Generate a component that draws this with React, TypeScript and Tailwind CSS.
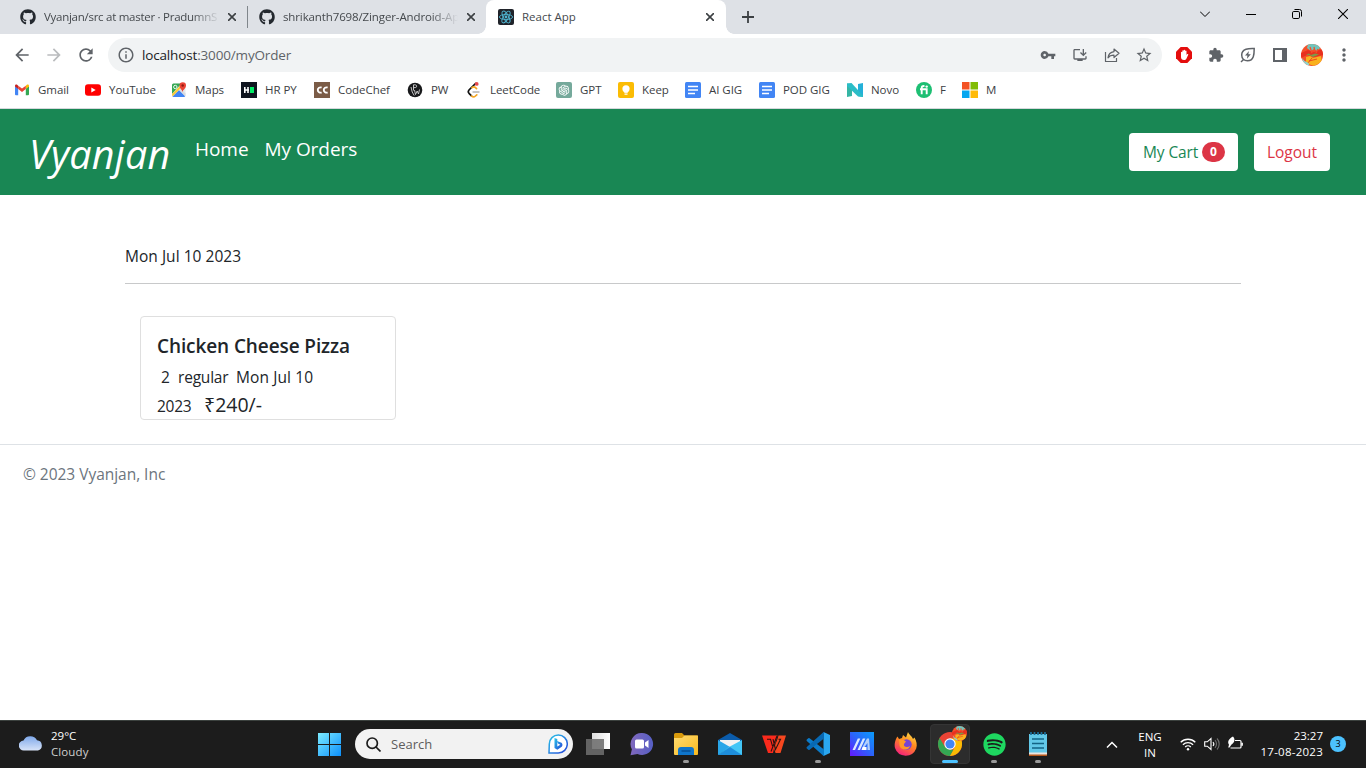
import type { ReactNode } from 'react';
import { FaGithub, FaSpotify } from 'react-icons/fa';
import { AiOutlineOpenAI } from 'react-icons/ai';
import { MdArrowBack, MdArrowForward, MdRefresh, MdInfoOutline, MdVpnKey, MdStarBorder, MdExtension, MdMoreVert, MdOutlineInstallDesktop } from 'react-icons/md';

/* ---------- browser chrome ---------- */

function CloseX() {
  return (
    <svg className="h-2 w-2" viewBox="0 0 8 8" stroke="#3c4043" strokeWidth="1.6">
      <path d="M0 0l8 8M8 0L0 8" />
    </svg>
  );
}

function ReactMark() {
  return (
    <svg className="h-4 w-4 shrink-0" viewBox="0 0 16 16">
      <rect width="16" height="16" rx="2" fill="#20232a" />
      <g fill="none" stroke="#4fb4d0" strokeWidth="0.9">
        <ellipse cx="8" cy="8" rx="6.6" ry="2.6" />
        <ellipse cx="8" cy="8" rx="6.6" ry="2.6" transform="rotate(60 8 8)" />
        <ellipse cx="8" cy="8" rx="6.6" ry="2.6" transform="rotate(120 8 8)" />
      </g>
      <circle cx="8" cy="8" r="1.4" fill="#4fb4d0" />
    </svg>
  );
}

function TabStrip() {
  return (
    <div className="flex h-[34px] bg-[#dee1e6] pl-2 text-[11.5px] text-[#45494d]">
      <div className="flex w-[240px] items-center border-r border-[#80868b] bg-clip-padding pl-3 [border-image:linear-gradient(to_bottom,transparent_20%,#80868b_20%,#80868b_80%,transparent_80%)_1]">
        <FaGithub className="h-4 w-4 shrink-0 text-[#24292f]" />
        <span className="ml-2 w-[182px] shrink-0 whitespace-nowrap tracking-[-0.27px] [mask-image:linear-gradient(to_right,black_148px,transparent_176px)]">
          Vyanjan/src at master · PradumnS
        </span>
        <span className="ml-[2px]"><CloseX /></span>
      </div>
      <div className="flex w-[238px] items-center pl-[11px]">
        <FaGithub className="h-4 w-4 shrink-0 text-[#24292f]" />
        <span className="ml-2 w-[182px] shrink-0 whitespace-nowrap tracking-[-0.12px] [mask-image:linear-gradient(to_right,black_148px,transparent_175px)]">
          shrikanth7698/Zinger-Android-Ap
        </span>
        <span className="ml-[2px]"><CloseX /></span>
      </div>
      <div className="relative flex w-[240px] items-center rounded-t-lg bg-white pl-3">
        <span className="absolute bottom-0 -left-2 h-2 w-2 bg-[radial-gradient(circle_at_0_0,#dee1e6_7.5px,#fff_8px)]" />
        <span className="absolute -right-2 bottom-0 h-2 w-2 bg-[radial-gradient(circle_at_100%_0,#dee1e6_7.5px,#fff_8px)]" />
        <ReactMark />
        <span className="ml-2 flex-1">React App</span>
        <span className="mr-3"><CloseX /></span>
      </div>
      <div className="flex flex-1 items-center pl-4">
        <svg className="h-3 w-3" viewBox="0 0 12 12" stroke="#3c4043" strokeWidth="1.8"><path d="M6 0v12M0 6h12" /></svg>
      </div>
      <div className="flex h-7 items-center text-black">
        <span className="flex w-[46px] justify-center">
          <svg className="h-[10px] w-[10px]" viewBox="0 0 10 10" fill="none" stroke="black"><path d="M0 2.5l5 5 5-5" /></svg>
        </span>
        <span className="flex w-[46px] justify-center">
          <svg className="h-[10px] w-[10px]" viewBox="0 0 10 10" stroke="black"><path d="M0 5.5h10" /></svg>
        </span>
        <span className="flex w-[46px] justify-center">
          <svg className="h-[10px] w-[10px]" viewBox="0 0 10 10" fill="none" stroke="black"><rect x="0.5" y="2.5" width="7" height="7" rx="1.3" /><path d="M2.5 .5h5a2 2 0 0 1 2 2v5" /></svg>
        </span>
        <span className="flex w-[46px] justify-center">
          <svg className="h-[10px] w-[10px]" viewBox="0 0 10 10" stroke="black" strokeWidth="1.1"><path d="M0 0l10 10M10 0L0 10" /></svg>
        </span>
      </div>
    </div>
  );
}

function ShareIcon() {
  return (
    <svg className="h-4 w-4" viewBox="0 0 16 16" fill="none" stroke="#5f6368" strokeWidth="1.2" strokeLinejoin="round">
      <path d="M1.5 5v9.5h11V11" />
      <path d="M10 2l5 4.3-5 4.2V8.2c-2.8 0-4.5.6-6 2.6.4-3.5 2.6-5.7 6-6.2z" />
    </svg>
  );
}

function AdblockIcon() {
  return (
    <svg className="h-4 w-4" viewBox="0 0 16 16">
      <path d="M4.7 0h6.6L16 4.7v6.6L11.3 16H4.7L0 11.3V4.7z" fill="#e40d0d" />
      <path d="M5 7.5V5.2a.7.7 0 0 1 1.3 0V4a.7.7 0 0 1 1.4 0v-.5a.7.7 0 0 1 1.4 0V4.2a.7.7 0 0 1 1.4 0V8l.8-.9c.6-.5 1.2 0 .9.6L10.5 11.5C10 12.5 9.2 13 8 13c-2 0-3-1.3-3-3z" fill="white" />
    </svg>
  );
}

function LeafBolt() {
  return (
    <svg className="h-4 w-4" viewBox="0 0 16 16" fill="none" stroke="#5f6368" strokeWidth="1.5">
      <path d="M14.2 1.5C9 1.3 1.7 1.5 1.7 8c0 3.5 2.5 5.8 5.8 5.8C14 13.8 14.2 7 14.2 1.5z" />
      <path d="M1 15l2.8-2.7" />
      <path d="M9 4L5 8.5h2.4L7 11.8l3.8-4.6H8.3z" fill="#5f6368" stroke="none" />
    </svg>
  );
}

function Avatar({ size }: { size: 'lg' | 'sm' }) {
  return (
    <svg className={size === 'lg' ? 'h-[22px] w-[22px]' : 'h-[15px] w-[15px]'} viewBox="0 0 22 22">
      <defs><clipPath id={'avatar-' + size}><circle cx="11" cy="11" r="11" /></clipPath></defs>
      <g clipPath={'url(#avatar-' + size + ')'}>
        <rect width="22" height="22" fill="#f4502a" />
        <path d="M7 0h11l1 4-3 3-3-2-3 2-4-3z" fill="#6fc5bd" />
        <path d="M0 9l7-3 5 2 10-3v6l-9 2-7-2-6 3z" fill="#e8301f" />
        <path d="M13 3l1 5M17 5l-2 4M9 3l2 6" stroke="#f4502a" strokeWidth="1.3" />
        <path d="M5 13l4-1 3 2 8-2 1 6-8 4-8-3z" fill="#f9b21d" />
        <path d="M5 10.5l3-1 2 1.5 4-1.5 4 1-6 2.5-3-1.5z" fill="#7d9a48" />
        <path d="M11 14l-5 6M8 17l8-2" stroke="#e8301f" strokeWidth=".8" />
        <path d="M1 14l2.5 3 4 2 1 3-6-2z" fill="#8ed4d0" />
      </g>
    </svg>
  );
}

function Slot({ children }: { children: ReactNode }) {
  return <span className="flex w-8 shrink-0 items-center justify-center">{children}</span>;
}

function Toolbar() {
  return (
    <div className="flex h-[38px] items-center bg-white pt-1 pl-[6px] text-[#5f6368]">
      <Slot><MdArrowBack className="h-5 w-5" /></Slot>
      <Slot><MdArrowForward className="h-5 w-5 text-[#babcbe]" /></Slot>
      <Slot><MdRefresh className="h-5 w-5" /></Slot>
      <div className="ml-[6px] flex h-[34px] w-[1054px] items-center rounded-full bg-[#f1f3f4] pr-[2px] pl-[9px]">
        <MdInfoOutline className="h-[18px] w-[18px]" />
        <span className="ml-[7px] flex-1 pt-px text-[13.5px] tracking-[-0.16px]">
          <span className="text-[#202124]">localhost</span>:3000/myOrder
        </span>
        <Slot><MdVpnKey className="h-4 w-4" /></Slot>
        <Slot><MdOutlineInstallDesktop className="h-4 w-4" /></Slot>
        <Slot><ShareIcon /></Slot>
        <Slot><MdStarBorder className="h-[18px] w-[18px]" /></Slot>
      </div>
      <div className="ml-[6px] flex items-center">
        <Slot><AdblockIcon /></Slot>
        <Slot><MdExtension className="h-4 w-4" /></Slot>
        <Slot><LeafBolt /></Slot>
        <Slot>
          <svg className="h-[14px] w-[14px]" viewBox="0 0 14 14"><path fillRule="evenodd" d="M0 0h14v14H0zM2 2v10h7V2z" fill="#5f6368" /></svg>
        </Slot>
        <Slot><Avatar size="lg" /></Slot>
        <Slot><MdMoreVert className="h-5 w-5" /></Slot>
      </div>
    </div>
  );
}

const icon = 'h-4 w-4 shrink-0';

function DocsIcon() {
  return (
    <svg className={icon} viewBox="0 0 16 16">
      <rect width="16" height="16" rx="1.5" fill="#4285f4" />
      <path d="M3 4.5h10M3 8h10M3 11.5h7" stroke="white" strokeWidth="1.6" />
    </svg>
  );
}

const bookmarks: { label: string; width: string; glyph: ReactNode }[] = [
  { label: 'Gmail', width: 'w-[71px]', glyph: (
    <svg className={icon} viewBox="0 0 16 16">
      <path d="M1 4v8.2a1 1 0 0 0 1 1h2.2V6.5z" fill="#4285f4" />
      <path d="M15 4v8.2a1 1 0 0 1-1 1h-2.2V6.5z" fill="#34a853" />
      <path d="M11.8 3.7V7L15 4.6V4c0-1.5-1.6-1.7-2.4-1z" fill="#fbbc04" />
      <path d="M4.2 7V3.7L8 6.5l3.8-2.8V7L8 9.9z" fill="#ea4335" />
      <path d="M1 4v.6L4.2 7V3.7l-.8-.7C2.6 2.3 1 2.5 1 4z" fill="#c5221f" />
    </svg>) },
  { label: 'YouTube', width: 'w-[86px]', glyph: (
    <svg className={icon} viewBox="0 0 16 16"><rect y="2.3" width="16" height="11.4" rx="3" fill="#f00" /><path d="M6.3 5.5v5L10.7 8z" fill="white" /></svg>) },
  { label: 'Maps', width: 'w-[70px]', glyph: (
    <svg className={icon} viewBox="0 0 16 16">
      <rect x="1" y="1.5" width="13.5" height="13.5" rx="1.5" fill="#e8eaed" />
      <path d="M1 3a1.5 1.5 0 0 1 1.5-1.5h8L1 12z" fill="#34a853" />
      <path d="M1.5 14.5L8 8l6 6-.5 1H2.5z" fill="#4285f4" />
      <path d="M1 12L10 3l1.5 1.5L1.5 14.5z" fill="#fbcb34" />
      <path d="M8 8l6.5 6.5v-3L9.8 6.5z" fill="#dadce0" />
      <circle cx="4.3" cy="5" r="1.7" fill="none" stroke="white" strokeWidth=".9" />
      <path d="M11.5 10C11.3 7.5 8.5 6.5 8.5 3.5a3.2 3.2 0 0 1 6.5 0c0 3-3 4-3.5 6.5z" fill="#ea4335" />
      <circle cx="11.7" cy="3.5" r="1.2" fill="#8c1a12" />
    </svg>) },
  { label: 'HR PY', width: 'w-[73px]', glyph: (
    <svg className={icon} viewBox="0 0 16 16"><path d="M0 0h16v16H0z" fill="#0e141e" /><path d="M3.8 5v6M7 5v6M3 8h5" stroke="white" strokeWidth="1.6" /><path d="M9 5h4v6H9z" fill="#00ea64" /></svg>) },
  { label: 'CodeChef', width: 'w-[93px]', glyph: (
    <svg className={icon} viewBox="0 0 16 16"><path d="M0 0h16v16H0z" fill="#7b5c47" /><path d="M7.6 5.7A2.6 2.6 0 1 0 7.6 10.3M13.6 5.7A2.6 2.6 0 1 0 13.6 10.3" fill="none" stroke="white" strokeWidth="1.9" /></svg>) },
  { label: 'PW', width: 'w-[59px]', glyph: (
    <svg className={icon} viewBox="0 0 16 16"><circle cx="8" cy="8" r="7.3" fill="#18191b" /><path d="M6.5 8.5V2.8h1.8c1.8 0 1.8 2.8 0 2.8H6.5M4 5l1.2 5 2 3.5M7.5 8l1 4.5 1.7-3.5 1.3 3 1-4.5" fill="none" stroke="#d4d4d4" strokeWidth=".9" /></svg>) },
  { label: 'LeetCode', width: 'w-[90px]', glyph: (
    <svg className={icon} viewBox="0 0 16 16" fill="none" strokeLinecap="round">
      <path d="M9.5 1.5L3 8c-1 1.2-1 2.2 0 3.3l2.5 2.6" stroke="#111" strokeWidth="1.7" />
      <path d="M6 5.7c1.2-1 2.5-1 3.5 0l1 1M5.5 14c1.3 1.2 2.7 1.2 4 0l1.3-1.2" stroke="#f5a623" strokeWidth="1.7" />
      <path d="M7 10h6" stroke="#b3b3b3" strokeWidth="1.4" /><circle cx="10.7" cy="1.9" r="1.9" fill="#e5484d" />
    </svg>) },
  { label: 'GPT', width: 'w-[62px]', glyph: (
    <span className="flex h-4 w-4 shrink-0 items-center justify-center rounded-[2px] bg-[#75a99b]"><AiOutlineOpenAI className="h-[14px] w-[14px] text-white" /></span>) },
  { label: 'Keep', width: 'w-[67px]', glyph: (
    <svg className={icon} viewBox="0 0 16 16"><rect width="16" height="16" rx="2" fill="#fbbc04" /><circle cx="8" cy="6.8" r="3.6" fill="white" /><path d="M6.2 9h3.6v1.7H6.2zM6.5 11.5h3v1.2h-3z" fill="white" /></svg>) },
  { label: 'AI GIG', width: 'w-[74px]', glyph: <DocsIcon /> },
  { label: 'POD GIG', width: 'w-[88px]', glyph: <DocsIcon /> },
  { label: 'Novo', width: 'w-[69px]', glyph: (
    <svg className={icon} viewBox="0 0 16 16"><path d="M0 1.5l5 .5v12L0 15z" fill="#35b5a4" /><path d="M11 2l5-1v14l-5-1z" fill="#24b0d8" /><path d="M0 1.5L4.5 1 16 13.5V15l-5-.5L0 4z" fill="#2bbdc7" /></svg>) },
  { label: 'F', width: 'w-[46px]', glyph: (
    <svg className={icon} viewBox="0 0 16 16"><circle cx="8" cy="8" r="8" fill="#1dbf73" /><path d="M5.7 12.3V6c0-1.5.8-2.2 2.8-1.9M4 7.3h6.7v5" fill="none" stroke="white" strokeWidth="1.9" /><circle cx="10.7" cy="4.6" r="1.2" fill="white" /></svg>) },
  { label: 'M', width: 'w-[40px]', glyph: (
    <svg className={icon} viewBox="0 0 16 16"><path d="M0 0h7.5v7.5H0z" fill="#f35325" /><path d="M8.5 0H16v7.5H8.5z" fill="#81bc06" /><path d="M0 8.5h7.5V16H0z" fill="#05a6f0" /><path d="M8.5 8.5H16V16H8.5z" fill="#ffba08" /></svg>) },
];

function Bookmarks() {
  return (
    <div className="flex h-[37px] border-b border-[#d5d8dc] bg-white pl-[14px] text-[11.5px] tracking-[-0.05px] text-[#3c4043]">
      {bookmarks.map((b) => (
        <div key={b.label} className={'flex h-9 shrink-0 items-center gap-2 whitespace-nowrap ' + b.width}>
          {b.glyph}
          <span>{b.label}</span>
        </div>
      ))}
    </div>
  );
}

/* ---------- page ---------- */

function Navbar() {
  return (
    <nav className="flex h-[86px] bg-[#198754] pr-9 pl-[29px] text-white">
      <span className="w-[166px] pt-[18px] text-[39.5px] leading-[54px] tracking-[0.2px] italic">Vyanjan</span>
      <div className="flex flex-1 gap-4 pt-[26px] text-[19px] leading-7 tracking-[-0.05px]">
        <a>Home</a>
        <a>My Orders</a>
      </div>
      <div className="flex items-start gap-4 pt-6">
        <button className="flex h-[38px] w-[109px] items-center rounded bg-white pl-[14px] text-[15.5px] text-[#198754]">
          <span className="w-[55px] pt-0.5 tracking-[-0.1px] whitespace-nowrap">My Cart</span>
          <span className="ml-1 flex h-5 w-[23px] items-center justify-center rounded-full bg-[#dc3545] text-xs font-bold text-white">0</span>
        </button>
        <button className="h-[38px] w-[76px] rounded bg-white pt-0.5 text-[15.5px] text-[#dc3545]">Logout</button>
      </div>
    </nav>
  );
}

function Orders() {
  return (
    <main className="px-[125px] text-[15.5px] text-[#212529]">
      <div className="border-b border-[#c8c9ca] pt-12 pb-[14px] leading-[26px] tracking-[0.03px]">Mon Jul 10 2023</div>
      <section className="mt-8 ml-[15px] h-[104px] w-64 rounded border border-[#dfdfdf] pt-4 pl-4">
        <h5 className="pt-px text-[19px] leading-6 font-semibold tracking-[-0.1px]">Chicken Cheese Pizza</h5>
        <div className="mt-[7px] flex pl-1 leading-6">
          <span className="w-[17px]">2</span>
          <span className="w-[58px] tracking-[-0.2px]">regular</span>
          <span className="tracking-[0.1px]">Mon Jul 10</span>
        </div>
        <div className="flex items-baseline pt-px leading-[31px]">
          <span className="w-[47px] tracking-[-0.3px]">2023</span>
          <span className="text-[19.5px] leading-[30px]">₹240/-</span>
        </div>
      </section>
    </main>
  );
}

/* ---------- taskbar ---------- */

function TaskSlot({ children, state }: { children: ReactNode; state?: 'open' | 'active' }) {
  return (
    <div className="relative flex h-12 w-11 shrink-0 items-center justify-center">
      {state === 'active' && <span className="absolute inset-x-[2px] inset-y-1 rounded border border-[#353535] bg-[#2c2c2c]" />}
      <span className="relative">{children}</span>
      {state === 'open' && <span className="absolute bottom-[5px] h-[3px] w-[6px] rounded-full bg-[#9a9a9a]" />}
      {state === 'active' && <span className="absolute bottom-[5px] h-[3px] w-4 rounded-full bg-[#4cc2ff]" />}
    </div>
  );
}

const app = 'h-6 w-6';

function Apps() {
  return (
    <div className="flex">
      <TaskSlot>
        <svg className={app} viewBox="0 0 24 24"><path d="M6 1h18v16H6z" fill="url(#tv)" /><path d="M0 7h18v16H0z" fill="#6d6d6d" fillOpacity=".88" /><defs><linearGradient id="tv"><stop stopColor="#ddd" /><stop offset="1" stopColor="white" /></linearGradient></defs></svg>
      </TaskSlot>
      <TaskSlot>
        <svg className={app} viewBox="0 0 24 24"><defs><linearGradient id="chat" x1="0" x2="1"><stop stopColor="#8068bd" /><stop offset="1" stopColor="#565fc4" /></linearGradient></defs><path d="M12 1a11 11 0 1 1-4.5 21L.5 23.2l1.4-6A11 11 0 0 1 12 1z" fill="url(#chat)" /><rect x="5" y="7.5" width="9" height="9" rx="1.5" fill="white" /><path d="M15 10.5l3.5-2.5v8L15 13.5z" fill="white" /></svg>
      </TaskSlot>
      <TaskSlot state="open">
        <svg className={app} viewBox="0 0 24 24"><defs><linearGradient id="fold" x2="1" y2="1"><stop stopColor="#ffdc72" /><stop offset="1" stopColor="#f7b81e" /></linearGradient></defs><path d="M0 2.5A1.5 1.5 0 0 1 1.5 1H8l2.5 2.5H24V10H0z" fill="#d99a0b" /><path d="M0 6h8l2.5-2.5H23a1 1 0 0 1 1 1V22a1 1 0 0 1-1 1H1a1 1 0 0 1-1-1z" fill="url(#fold)" /><path d="M4 23v-5a3 3 0 0 1 3-3h10a3 3 0 0 1 3 3v5z" fill="#0f75ca" /><path d="M7.5 19h9" stroke="#075297" strokeWidth="1.6" /></svg>
      </TaskSlot>
      <TaskSlot>
        <svg className={app} viewBox="0 0 24 24"><path d="M0 8l12-7 12 7v4H0z" fill="#0b5cab" /><path d="M2 8h20v8H2z" fill="#f2f2f2" /><path d="M0 8l12 7-12 8z" fill="#29a6e8" /><path d="M24 8v15H0l11-8z" fill="#43c6f6" /><path d="M12 15l12 8H0z" fill="#1e8edb" /></svg>
      </TaskSlot>
      <TaskSlot>
        <svg className={app} viewBox="0 0 24 24"><path d="M0 3.5h15.5l-2 6.5L11 21H6z" fill="#fb2a1c" /><path d="M16.5 3.5H24L18.5 21h-5L12 16l3.5-9z" fill="#f6471f" /><path d="M5 7.2h3.5l2 7M9 19.5L15 4M11 7.2l2.5 10.3L18.5 7.2h-2" fill="none" stroke="#2a1310" strokeWidth="1.1" /></svg>
      </TaskSlot>
      <TaskSlot state="open">
        <svg className={app} viewBox="0 0 24 24">
          <path d="M17.5 0L24 3v18l-6.5 3z" fill="#2aa7f0" />
          <path d="M.8 7.6l1.5-1.4a1 1 0 0 1 1.3 0L18 17.5V24a1.5 1.5 0 0 1-1-.5L.8 8.9a.9.9 0 0 1 0-1.3z" fill="#0b7bc9" />
          <path d="M.8 16.4l1.5 1.4a1 1 0 0 0 1.3 0L18 6.5V0a1.5 1.5 0 0 0-1 .5L.8 15.1a.9.9 0 0 0 0 1.3z" fill="#0869b3" />
        </svg>
      </TaskSlot>
      <TaskSlot>
        <svg className={app} viewBox="0 0 24 24"><defs><linearGradient id="ar" y1="1" x2="1" y2="0"><stop stopColor="#6517ff" /><stop offset=".5" stopColor="#2b64fa" /><stop offset="1" stopColor="#0a9dfb" /></linearGradient></defs><path d="M0 0h24v24H0z" fill="url(#ar)" /><path d="M2.5 18L7.8 6.500h2.500L5 18zM7.500 18l5.300-11.500h2.500L10 18z" fill="#dbe8ff" /><path d="M17 6.500h2L20 18h-2.500V11l-3 4h-2z" fill="#b4cffa" /><path d="M12.500 15h4v3h-5z" fill="white" /></svg>
      </TaskSlot>
      <TaskSlot>
        <svg className={app} viewBox="0 0 24 24"><defs><linearGradient id="fx" x1=".8" x2=".3" y2="1"><stop stopColor="#ffe14a" /><stop offset=".45" stopColor="#ff8a1e" /><stop offset="1" stopColor="#f5207c" /></linearGradient></defs><path d="M3.5 4.5L5 7l3-1 1-3 3 2.5L14 0c1 3 3.5 3.5 5 7l1.5-1.5c2 3.5 3 7.5 1.7 11A11.3 11.3 0 0 1 1 16C0 12 1.5 7 3.5 4.5z" fill="url(#fx)" /><circle cx="12.5" cy="12.5" r="5.2" fill="#7543d4" /><path d="M5 8c3-1 5 0 7 1.5L10 12c-1 3 3.5 4 6 2-1 5-9.5 4.5-10.5-.5z" fill="#ff9828" /></svg>
      </TaskSlot>
      <TaskSlot state="active">
        <svg className={app} viewBox="0 0 24 24">
          <circle cx="12" cy="12" r="12" fill="#ea4335" />
          <path d="M12 6.5h10.7A12 12 0 0 1 11.8 24l5-9z" fill="#fbbc04" />
          <path d="M1.6 6L7 15l4.8 3-1 5.95A12 12 0 0 1 1.6 6z" fill="#34a853" /><path d="M7.2 14.8L11 17.5h4.5L11.8 24h-1z" fill="#34a853" />
          <circle cx="12" cy="12" r="5.7" fill="white" /><circle cx="12" cy="12" r="4.6" fill="#4285f4" />
        </svg>
        <span className="absolute -top-[6px] left-[14px]"><Avatar size="sm" /></span>
      </TaskSlot>
      <TaskSlot state="open"><FaSpotify className="h-[23px] w-[23px] text-[#1ed760]" /></TaskSlot>
      <TaskSlot state="open">
        <svg className={app} viewBox="0 0 24 24"><path d="M3 2h18v20H3z" fill="#62c8e8" /><path d="M3 20.5h18V24H3z" fill="#e9e4df" /><path d="M3 22.5h18V24H3z" fill="#b5571b" /><path d="M5 0v3M8.500 0v3M12 0v3M15.500 0v3M19 0v3" stroke="#1b6f9b" strokeWidth="1.7" /><path d="M6 7h12M6 11.5h12M6 16h12" stroke="#136385" strokeWidth="1.7" /></svg>
      </TaskSlot>
    </div>
  );
}

function Taskbar() {
  return (
    <footer className="flex h-12 shrink-0 items-center border-t border-[#3b413e] bg-[#1c1c1c] text-[11.5px] text-white">
      <svg className="mb-1 ml-[19px] h-4 w-6" viewBox="0 0 24 16"><defs><linearGradient id="cl" y2="1" x2="0"><stop stopColor="#7ea8ea" /><stop offset="1" stopColor="#d7e3f8" /></linearGradient></defs><path d="M5 15.5a5 5 0 0 1-.5-10A7.5 7.5 0 0 1 18 5.3 5.2 5.2 0 0 1 19 15.5z" fill="url(#cl)" /></svg>
      <div className="mb-0.5 ml-2 w-[267px] leading-4">
        <div>29°C</div>
        <div className="tracking-[0.1px] text-[#cfcfcf]">Cloudy</div>
      </div>
      <svg className="h-[23px] w-[23px]" viewBox="0 0 23 23"><defs><linearGradient id="win" x2="1" y2="1"><stop stopColor="#7cebff" /><stop offset="1" stopColor="#0c8ffb" /></linearGradient></defs><path d="M0 0h11v11H0zM12 0h11v11H12zM0 12h11v11H0zM12 12h11v11H12z" fill="url(#win)" /></svg>
      <div className="mb-px ml-[14px] flex h-[30px] w-[218px] items-center rounded-full bg-[#f2f2f2] pr-[5px] pl-[11px] text-[13px] text-[#5d5d5d]">
        <svg className="h-[15px] w-[15px]" viewBox="0 0 15 15" fill="none" stroke="#1c1c1c" strokeWidth="1.7"><circle cx="6.2" cy="6.2" r="5.2" /><path d="M10 10l4.5 4.5" /></svg>
        <span className="ml-[10px] flex-1 pt-px">Search</span>
        <svg className="h-5 w-5" viewBox="0 0 20 20"><defs><linearGradient id="bing" x2="1" y2="1"><stop stopColor="#28c5e8" /><stop offset="1" stopColor="#2443d8" /></linearGradient></defs><path d="M1 19l.3-9A9 9 0 1 1 10.3 19z" fill="white" stroke="url(#bing)" strokeWidth="1.5" /><path d="M6.5 4l2.8 1v7.5l3-1.8-2.3-1.2-1-2.5 4.5 1.8c1.7 1.7 1 3.7-.5 4.5L9.3 15.7l-2.8-1.7z" fill="url(#bing)" /></svg>
      </div>
      <div className="mb-px ml-[3px]"><Apps /></div>
      <svg className="ml-[46px] h-3 w-3" viewBox="0 0 12 12" fill="none" stroke="white" strokeWidth="1.5"><path d="M1 8.5l5-5 5 5" /></svg>
      <div className="ml-[17px] w-[30px] text-center leading-4"><div>ENG</div><div>IN</div></div>
      <div className="mb-px ml-[15px] flex items-center gap-2">
        <svg className="h-4 w-4" viewBox="0 0 16 16" fill="none" stroke="white" strokeWidth="1.3"><path d="M.7 6.3a10.3 10.3 0 0 1 14.6 0M2.9 8.7a7.2 7.2 0 0 1 10.2 0M5.2 11a4 4 0 0 1 5.6 0" /><circle cx="8" cy="13.2" r="1.2" fill="white" stroke="none" /></svg>
        <svg className="h-4 w-4" viewBox="0 0 16 16" fill="none" stroke="white" strokeWidth="1.1"><path d="M.7 5.8h2.6L7 2.5v11L3.3 10.2H.7z" /><path d="M9 6a3 3 0 0 1 0 4" /><path d="M11 4.2a5.5 5.5 0 0 1 0 7.6M13 2.5a8 8 0 0 1 0 11" stroke="#6f6f6f" /></svg>
        <svg className="-ml-px h-4 w-4" viewBox="0 0 16 16"><path d="M8 4.5h5a1 1 0 0 1 1 1V11a1 1 0 0 1-1 1H3.5M15.300 6.800v3" fill="none" stroke="white" strokeWidth="1.2" /><path d="M6 .5C8.3 3 8 6.5 4.3 8.7L2.5 11.5H1.2L2 8.8C0 5.5 2 2.5 6 .5z" fill="white" /></svg>
      </div>
      <div className="mb-0.5 ml-[9px] w-[71px] text-right leading-4"><div>23:27</div><div className="tracking-[0.25px]">17-08-2023</div></div>
      <div className="mb-px ml-[7px] flex h-4 w-4 items-center justify-center rounded-full bg-[#4cc2ff] text-[9px] text-black">3</div>
    </footer>
  );
}

export default function App() {
  return (
    <div className="flex h-screen w-full flex-col overflow-hidden bg-white font-['Open_Sans','Noto_Sans',sans-serif]">
      <TabStrip />
      <Toolbar />
      <Bookmarks />
      <Navbar />
      <Orders />
      <div className="mt-6 flex-1 border-t border-[#dee2e6] pt-[17px] pl-[23px] text-[15.5px] leading-6 tracking-[-0.03px] text-[#6c757d]">© 2023 Vyanjan, Inc</div>
      <Taskbar />
    </div>
  );
}
